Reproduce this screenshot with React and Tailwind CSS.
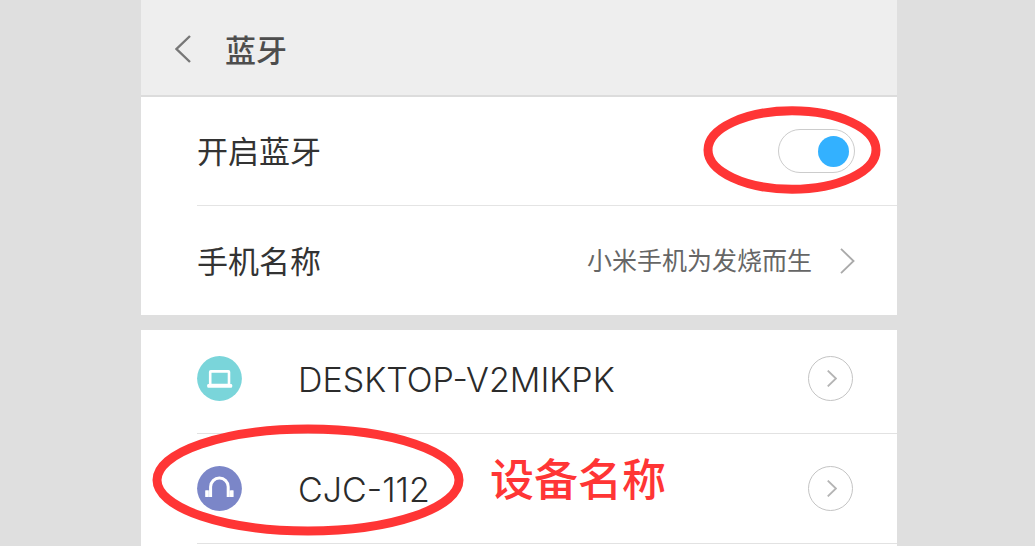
import { useState } from "react";

function Chevron({ className, width = 2, left = false }) {
  return (
    <svg viewBox="0 0 16 28" className={className} fill="none" stroke="currentColor" strokeWidth={width} aria-hidden="true">
      <path d={left ? "M15 1 1.5 14 15 27" : "M1 1 14.5 14 1 27"} />
    </svg>
  );
}

function LaptopIcon() {
  return (
    <svg viewBox="0 0 45 45" className="size-[45px] shrink-0" aria-hidden="true">
      <circle cx="22.5" cy="22.5" r="22.4" fill="#7ad5da" />
      <rect x="13.2" y="15.4" width="18.8" height="13.6" rx="0.6" fill="none" stroke="#fff" strokeWidth="2.6" />
      <rect x="10.2" y="28" width="25" height="3.8" rx="1.2" fill="#fff" />
    </svg>
  );
}

function HeadphonesIcon() {
  return (
    <svg viewBox="0 0 45 45" className="size-[45px] shrink-0" aria-hidden="true">
      <circle cx="22.5" cy="22.5" r="22.4" fill="#7b86c8" />
      <path d="M13.6 31V20.8a8.8 8.8 0 0 1 17.6 0V31" fill="none" stroke="#fff" strokeWidth="3" />
      <rect x="8.2" y="24.2" width="3.6" height="6.8" rx="0.6" fill="#fff" />
      <rect x="33" y="24.2" width="3.6" height="6.8" rx="0.6" fill="#fff" />
      <path d="M11.6 24.6h1v6.4h-1zM32.2 24.6h1v6.4h-1z" fill="#fff" opacity="0.6" />
    </svg>
  );
}

function DeviceRow({ icon, name, children }) {
  return (
    <li className="group relative pl-14">
      <div className="flex items-center border-b border-[#e2e2e2] pt-8 pr-11 pb-8 group-first:pt-[26px]">
        {icon}
        <span className="ml-14 flex-1 pt-0.5 text-[34px] leading-10 font-light text-[#2b2b2b]">{name}</span>
        <button
          type="button"
          aria-label={name}
          className="flex size-[45px] items-center justify-center rounded-full border border-[#c4c4c4] text-[#b4b4b4]"
        >
          <Chevron className="ml-0.5 h-[17px] w-[10px]" width={3} />
        </button>
      </div>
      {children}
    </li>
  );
}

export default function App() {
  const [enabled, setEnabled] = useState(true);

  return (
    <div className="flex min-h-screen flex-col bg-[#dfdfdf] pr-[138px] pl-[141px] font-['Inter','Noto_Sans_CJK_SC',sans-serif]">
      <header className="flex h-[97px] items-center border-b-2 border-[#dcdcdc] bg-[#eee] pt-0.5 pl-[34px]">
        <button type="button" aria-label="返回" className="text-[#777]">
          <Chevron className="h-7 w-4" width={2.4} left />
        </button>
        <h1 className="ml-[34px] pt-1 text-[31px] leading-10 font-medium text-[#4d4d4d]">蓝牙</h1>
      </header>

      <section className="bg-white pl-14">
        <div className="relative flex h-[109px] items-center justify-between border-b border-[#e4e4e4] pr-[42px]">
          <label htmlFor="bluetooth" className="pt-0.5 text-[31px] leading-10 text-[#333]">
            开启蓝牙
          </label>
          <input
            id="bluetooth"
            type="checkbox"
            role="switch"
            checked={enabled}
            onChange={(e) => setEnabled(e.target.checked)}
            className="flex h-11 w-[77px] appearance-none items-center justify-start rounded-full border border-[#ccc] bg-white px-[5px] before:size-[31px] before:rounded-full before:bg-[#bbb] checked:justify-end checked:before:bg-[#33b1ff]"
          />
          <svg viewBox="0 0 178 88" className="pointer-events-none absolute top-[9px] right-4 h-[88px] w-[178px]" aria-hidden="true">
            <ellipse cx="89" cy="44" rx="84" ry="39.2" fill="none" stroke="#ff3535" strokeWidth="9" />
          </svg>
        </div>
        <div className="flex h-[109px] items-center pr-[42px]">
          <span className="flex-1 pt-0.5 text-[31px] leading-10 text-[#333]">手机名称</span>
          <span className="text-[25px] leading-8 text-[#666]">小米手机为发烧而生</span>
          <Chevron className="ml-7 h-[26px] w-[15px] text-[#aaa]" />
        </div>
      </section>

      <ul className="mt-[15px] flex-1 bg-white">
        <DeviceRow icon={<LaptopIcon />} name="DESKTOP-V2MIKPK" />
        <DeviceRow icon={<HeadphonesIcon />} name="CJC-112">
          <svg viewBox="0 0 312 112" className="pointer-events-none absolute -top-2.5 left-[11px] h-28 w-[312px]" aria-hidden="true">
            <ellipse cx="156" cy="56" rx="151" ry="51" fill="none" stroke="#ff3535" strokeWidth="9" />
          </svg>
          <span className="pointer-events-none absolute top-5 left-[349px] text-[44px] leading-[52px] font-medium text-[#ff3535]">
            设备名称
          </span>
        </DeviceRow>
      </ul>
    </div>
  );
}
